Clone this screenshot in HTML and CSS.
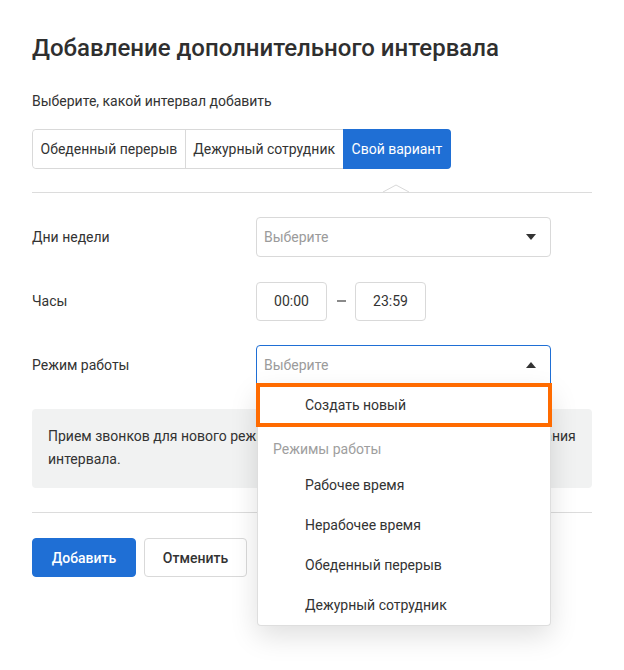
FILE: index.html
```html
<!DOCTYPE html>
<html lang="ru">
<head>
<meta charset="utf-8">
<title>Добавление дополнительного интервала</title>
<link rel="stylesheet" href="styles.css">
</head>
<body>
<div class="page">
  <h1 class="title">Добавление дополнительного интервала</h1>
  <p class="subtitle">Выберите, какой интервал добавить</p>
  <div class="segmented">
    <button class="seg">Обеденный перерыв</button>
    <button class="seg">Дежурный сотрудник</button>
    <button class="seg seg-active">Свой вариант</button>
  </div>
  <div class="divider divider-top">
    <svg class="notch" width="26" height="9" viewBox="0 0 26 9"><polyline points="0,8 13,1 26,8" fill="#fff" stroke="#d9d9d9" stroke-width="1"/></svg>
  </div>

  <div class="form">
    <div class="row">
      <span class="label">Дни недели</span>
      <div class="select-wrap">
        <div class="select">
          <span class="placeholder">Выберите</span>
          <span class="arrow arrow-down"></span>
        </div>
      </div>
    </div>
    <div class="row">
      <span class="label">Часы</span>
      <div class="time-group">
        <div class="time">00:00</div>
        <span class="dash"></span>
        <div class="time">23:59</div>
      </div>
    </div>
    <div class="row">
      <span class="label">Режим работы</span>
      <div class="select-wrap">
        <div class="select select-open">
          <span class="placeholder">Выберите</span>
          <span class="arrow arrow-up"></span>
        </div>
        <div class="dropdown">
          <div class="option option-create">Создать новый</div>
          <div class="group-title">Режимы работы</div>
          <div class="option">Рабочее время</div>
          <div class="option">Нерабочее время</div>
          <div class="option">Обеденный перерыв</div>
          <div class="option">Дежурный сотрудник</div>
        </div>
      </div>
    </div>
  </div>

  <div class="info">Прием звонков для нового режима работы вы настроите сразу после создания<br>интервала.</div>

  <div class="divider divider-bottom"></div>

  <div class="actions">
    <button class="btn btn-primary">Добавить</button>
    <button class="btn btn-secondary">Отменить</button>
  </div>
</div>
</body>
</html>
```

FILE: styles.css
```css
* { box-sizing: border-box; }
html, body { margin: 0; padding: 0; background: #fff; }
body {
  font-family: Roboto, "Liberation Sans", Arial, sans-serif;
  color: #333;
  font-size: 14px;
  min-height: 670px;
}
.page {
  padding: 32px 32px 0 32px;
  width: 624px;
  min-height: 670px;
}
.title {
  margin: 0;
  font-size: 24px;
  line-height: 32px;
  font-weight: 500;
  color: #2f2f2f;
}
.subtitle {
  margin: 27px 0 0 0;
  font-size: 14px;
  line-height: 20px;
  color: #333;
}
.segmented {
  margin-top: 18px;
  display: inline-flex;
  border: 1px solid #d9d9d9;
  border-radius: 4px;
  height: 40px;
}
.seg {
  font-family: inherit;
  font-size: 14px;
  color: #333;
  background: #fff;
  border: 0;
  border-left: 1px solid #d9d9d9;
  padding: 0 7.5px;
  height: 38px;
  cursor: pointer;
}
.seg:first-child { border-left: 0; border-radius: 4px 0 0 4px; }
.seg-active {
  background: #1f6fd5;
  color: #fff;
  border-left-color: #1f6fd5;
  border-radius: 0 4px 4px 0;
  margin: -1px -1px -1px 0;
  height: 40px;
  padding: 0 9px 0 8px;
}
.divider {
  height: 1px;
  background: #dcdcdc;
  position: relative;
}
.divider-top { margin-top: 23px; }
.notch {
  position: absolute;
  left: 351px;
  top: -8px;
  display: block;
}
.form {
  margin-top: 24px;
  display: flex;
  flex-direction: column;
  gap: 24px;
}
.row {
  display: grid;
  grid-template-columns: 224px 295px;
  align-items: center;
  height: 40px;
}
.label { font-size: 14px; color: #333; }
.select-wrap { position: relative; height: 40px; }
.select {
  height: 40px;
  border: 1px solid #d9d9d9;
  border-radius: 4px;
  display: flex;
  align-items: center;
  justify-content: space-between;
  padding: 0 14px 0 7px;
  background: #fff;
}
.select-open {
  border-color: #1f6fd5;
  border-radius: 4px 4px 0 0;
}
.placeholder { color: #9b9b9b; font-size: 14px; }
.arrow {
  width: 0; height: 0;
  border-left: 5.5px solid transparent;
  border-right: 5.5px solid transparent;
}
.arrow-down { border-top: 6px solid #333; }
.arrow-up { border-bottom: 6px solid #333; }
.time-group {
  display: flex;
  align-items: center;
}
.time {
  width: 71px;
  height: 39px;
  border: 1px solid #d9d9d9;
  border-radius: 4px;
  display: flex;
  align-items: center;
  justify-content: center;
  font-size: 14px;
  color: #333;
}
.dash {
  width: 9px;
  height: 1.5px;
  background: #8a8a8a;
  margin: 0 9px 0 10px;
}
.dropdown {
  position: absolute;
  top: 40px;
  left: 1px;
  right: 0;
  background: #fff;
  border: 1px solid #dedede;
  border-top: 0;
  border-radius: 0 0 4px 4px;
  box-shadow: 0 10px 28px rgba(0,0,0,0.13);
  z-index: 10;
}
.option {
  height: 40px;
  line-height: 40px;
  padding-left: 47px;
  font-size: 14px;
  color: #333;
}
.option-create { position: relative; }
.option-create::after {
  content: "";
  position: absolute;
  left: -2px;
  right: -2px;
  top: -2px;
  bottom: -2px;
  border: 4px solid #ff6b00;
}
.group-title {
  height: 40px;
  padding: 14px 0 6px 15px;
  line-height: 20px;
  color: #9e9e9e;
  font-size: 14px;
}
.info {
  margin-top: 24px;
  background: #f1f2f2;
  border-radius: 4px;
  padding: 16px 16px;
  font-size: 14px;
  line-height: 23px;
  color: #333;
  min-height: 79px;
  white-space: nowrap;
  overflow: hidden;
}
.divider-bottom { margin-top: 24px; }
.actions {
  margin-top: 25px;
  display: flex;
  gap: 8px;
}
.btn {
  font-family: inherit;
  font-size: 14px;
  font-weight: 500;
  height: 39px;
  border-radius: 4px;
  cursor: pointer;
}
.btn-primary {
  width: 104px;
  background: #1f6fd5;
  color: #fff;
  border: 1px solid #1f6fd5;
}
.btn-secondary {
  width: 103px;
  background: #fff;
  color: #333;
  border: 1px solid #d9d9d9;
}
```
